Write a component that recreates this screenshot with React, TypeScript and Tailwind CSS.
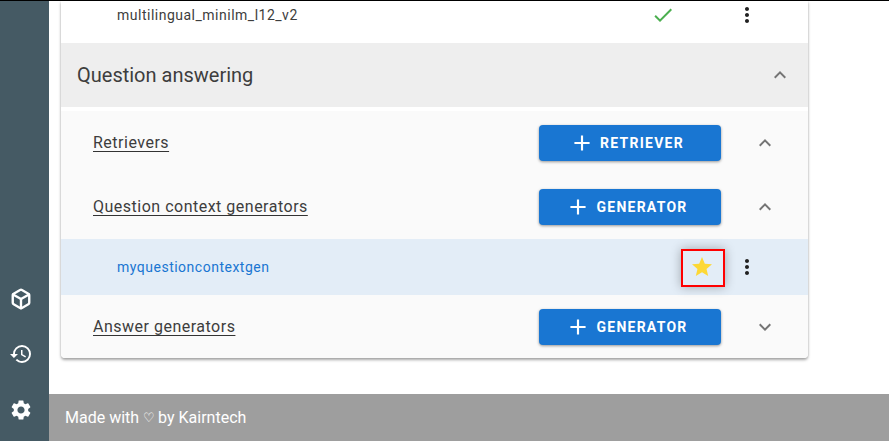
import React from 'react';
import { Box } from 'lucide-react';
import { MdAdd, MdCheck, MdExpandLess, MdExpandMore, MdHistory, MdMoreVert, MdSettings, MdStar } from 'react-icons/md';

const GroupRow = ({ title, button, open, pad }: { title: string; button: string; open: boolean; pad: string }) => (
  <div className={`flex items-center pl-8 ${pad}`}>
    <span className="text-base leading-6 tracking-[0.5px] text-[#3d3d3d] underline decoration-[#333333] underline-offset-[3px]">{title}</span>
    <button className="ml-auto flex h-9 w-[182px] items-center justify-center gap-[5px] rounded bg-[#1976d2] pr-[7px] text-sm font-bold tracking-[1.25px] text-white shadow-[0_1px_3px_rgba(0,0,0,0.4)]">
      <MdAdd className="size-[26px]" />
      {button}
    </button>
    <div className="ml-8 mr-[31px] flex w-[24px] justify-center text-[#757575]">
      {open ? <MdExpandLess className="size-6" /> : <MdExpandMore className="size-6" />}
    </div>
  </div>
);

const App = () => {
  return (
    <div className="flex h-[441px] w-[889px] overflow-hidden border-t border-black bg-white font-['Roboto',sans-serif]">
      <aside className="flex w-[49px] shrink-0 flex-col items-center bg-[#455a64] pb-[19px] pr-[7px] text-white">
        <div className="mt-auto flex flex-col items-center gap-8">
          <Box className="size-[22px]" strokeWidth={2.6} />
          <MdHistory className="size-6" />
          <MdSettings className="size-6" />
        </div>
      </aside>

      <div className="flex min-w-0 flex-1 flex-col">
        <main className="flex-1 pl-3 pr-[81px]">
          <div className="overflow-hidden rounded-b bg-white shadow-[0_2px_3px_rgba(0,0,0,0.35),0_0_2px_rgba(0,0,0,0.12)]">
            <div className="flex h-[42px] items-start pl-14 pt-[2px]">
              <span className="text-sm leading-6 tracking-[0.5px] text-[#3d3d3d]">multilingual_minilm_l12_v2</span>
              <MdCheck className="ml-[353px] size-6 text-[#4caf50]" />
              <MdMoreVert className="ml-[60px] size-6 text-[#212121]" />
            </div>

            <div className="flex h-16 items-center bg-[#eeeeee] pl-4 pr-4">
              <span className="text-xl text-[#3d3d3d]">Question answering</span>
              <MdExpandLess className="ml-auto size-6 text-[#757575]" />
            </div>

            <div className="mt-1 bg-[#fafafa]">
              <GroupRow title="Retrievers" button="RETRIEVER" open pad="pt-[14px]" />
              <GroupRow title="Question context generators" button="GENERATOR" open pad="pt-[28px] pb-[14px]" />

              <div className="flex h-14 items-center bg-[#e3edf7] pl-14">
                <span className="text-sm tracking-[0.5px] text-[#1976d2]">myquestioncontextgen</span>
                <div className="ml-auto mt-[2px] flex h-[38px] w-11 items-center justify-center border-2 border-[#ff0000] pb-[2px] pr-[2px] shadow-[0_0_10px_rgba(0,0,0,0.3)]">
                  <MdStar className="size-6 text-[#fdd835]" />
                </div>
                <MdMoreVert className="ml-[10px] mr-[49px] size-6 text-[#212121]" />
              </div>

              <GroupRow title="Answer generators" button="GENERATOR" open={false} pad="pt-[14px] pb-[13px]" />
            </div>
          </div>
        </main>

        <footer className="flex h-[47px] items-center bg-[#9e9e9e] pl-4 text-base text-white">
          Made with <span className="mx-[3.5px] text-[13px]">♡</span> by Kairntech
        </footer>
      </div>
    </div>
  );
};

export default App;
